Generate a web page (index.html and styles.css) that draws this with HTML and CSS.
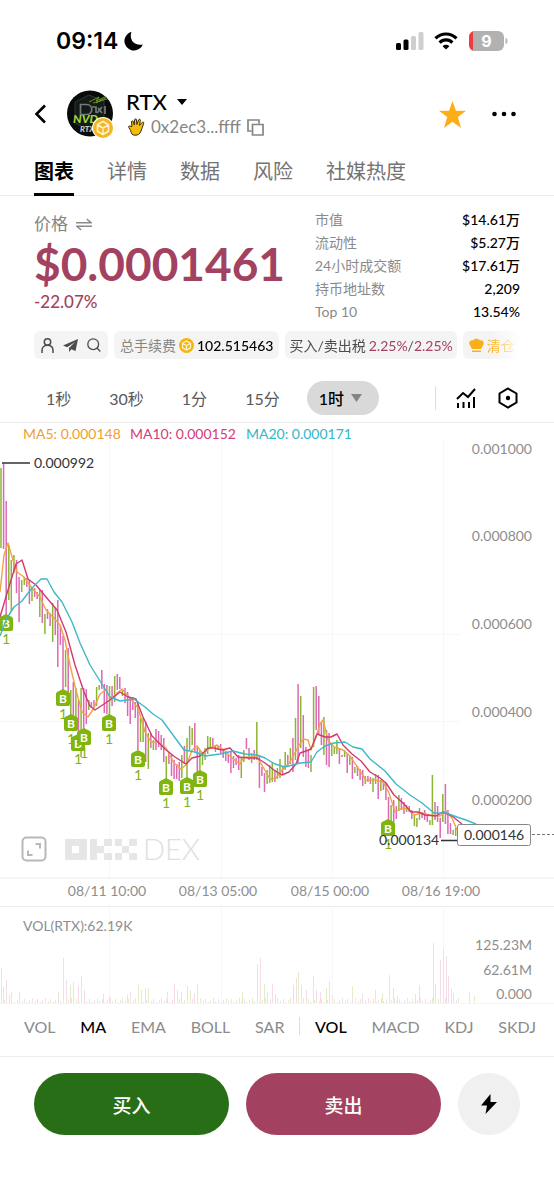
FILE: index.html
```html
<!DOCTYPE html>
<html lang="zh-CN">
<head>
<meta charset="utf-8">
<meta name="viewport" content="width=device-width, initial-scale=1">
<title>RTX</title>
<link rel="stylesheet" href="styles.css">
</head>
<body>
<div class="status">
  <span class="time">09:14</span>
  <svg class="moon" width="20" height="20" viewBox="0 0 20 20"><path d="M7.500.8A9.500 9.500 0 1 0 18.800 13.400C11 15.500 4.500 9 7.500.8Z"/></svg>
  <svg class="signal" width="28" height="20" viewBox="0 0 28 20"><rect x="0" y="12" width="5" height="7" rx="1.500"/><rect x="7.500" y="8.500" width="5" height="10.500" rx="1.500"/><rect x="15" y="5" width="5" height="14" rx="1.500" fill="#cfcfcf"/><rect x="22.500" y="1" width="5" height="18" rx="1.500" fill="#cfcfcf"/></svg>
  <svg class="wifi" width="24" height="18" viewBox="0 0 24 18" fill="none" stroke="#000" stroke-width="3.200"><path d="M1.500 6.300a15 15 0 0 1 21 0M5.600 10.600a9 9 0 0 1 12.800 0"/><path d="M12 17.500 8.600 14.200a4.800 4.800 0 0 1 6.800 0Z" fill="#000" stroke="none"/></svg>
  <svg class="battery" width="40" height="20" viewBox="0 0 40 20"><rect x="1" width="35" height="20" rx="6" fill="#b1b1b1"/><path d="M7 0H5v20h2a6 6 0 0 1-6-6V6a6 6 0 0 1 6-6Z" fill="#ee3b42"/><path d="M37.500 6.500a4 4 0 0 1 0 7Z" fill="#b1b1b1"/><text x="18.500" y="16" text-anchor="middle" class="battery-level">9</text></svg>
</div>

<header class="top">
  <button class="plain" aria-label="返回"><svg width="13" height="20" viewBox="0 0 13 20" fill="none" stroke="#000" stroke-width="2.600"><path d="M11 1.500 2.500 10l8.500 8.500"/></svg></button>
  <svg class="avatar" width="47" height="48" viewBox="0 0 47 48">
    <clipPath id="disc"><circle cx="23" cy="23.500" r="23"/></clipPath>
    <g clip-path="url(#disc)"><rect width="47" height="48" fill="#080b09"/><path d="m8 12 14-7 15 6v23l-13 7-16-8Z" fill="#141a15" stroke="#2c3a32"/><path d="M13.500 14.500h6c7 0 7 10 0 10h-6ZM25 17h4v6M31 18l4 5M35 17l-5 6M38 16v8" fill="none" stroke="#727b78" stroke-width="1.700"/><path d="m22 12 10-5-3 4 11-5M26 13l14-4M29 13l11-6" fill="none" stroke="#7eb32a" stroke-width=".8"/><text x="6" y="33" class="avatar-name">NVD</text><text x="13" y="42" class="avatar-sub">RTX</text></g>
    <circle cx="36" cy="38" r="11" fill="#fff"/><circle cx="36" cy="38" r="10" fill="#f5b522"/><path d="m36 31.500 5.500 3.200v6.500L36 44.500l-5.500-3.300v-6.500ZM30.500 35l5.500 3 5.500-3M36 38v6" fill="none" stroke="#fff3c8" stroke-width="1.600"/>
  </svg>
  <div class="token">
    <button class="plain name">RTX <svg width="10" height="6" viewBox="0 0 10 6"><path d="M0 0h10L5 6Z"/></svg></button>
    <div class="address">
      <svg width="17" height="18" viewBox="0 0 17 18"><path d="M1.500 8 4 8.500 3.500 4c0-1.500 1.700-1.500 2 0l.8 3L6.500 2c.3-1.500 2-1.500 2 0l.4 4.500L10.500 2c.6-1.300 2-.8 1.800.5l-.8 5L14 4.500c1-1 2.200 0 1.600 1.200L13 13c-1 3-3 4.300-6 4.200-3 0-4-2-4.300-4.700L.8 9.500C.3 8.500.8 7.800 1.500 8Z" fill="#f4bd0b" stroke="#342b08"/></svg>
      <span>0x2ec3...ffff</span>
      <button class="plain" aria-label="复制"><svg width="17" height="17" viewBox="0 0 17 17" fill="none" stroke="#858585" stroke-width="1.700"><path d="M4.500 12H1V1h11v3.500M5.500 5.500H16V16H5.500Z"/></svg></button>
    </div>
  </div>
  <button class="plain star" aria-label="收藏"><svg width="27" height="27" viewBox="0 0 27 27"><path d="m13.500 0 3.400 9.700H27l-8.200 6.400L22 27l-8.500-6.300L5 27l3.200-10.900L0 9.700h10.100Z" fill="#fdae16"/></svg></button>
  <button class="plain" aria-label="更多"><svg width="24" height="6" viewBox="0 0 24 6"><circle cx="2.500" cy="3" r="2.300"/><circle cx="12" cy="3" r="2.300"/><circle cx="21.500" cy="3" r="2.300"/></svg></button>
</header>

<nav class="tabs">
  <a class="active" href="#chart">图表</a><a href="#info">详情</a><a href="#data">数据</a><a href="#risk">风险</a><a href="#social">社媒热度</a>
</nav>

<section class="summary">
  <div class="price-box">
    <div class="label">价格 <svg width="16" height="13" viewBox="0 0 16 13" fill="none" stroke="#8a8a8a" stroke-width="1.500"><path d="M0 4.700h15L10.800 1M16 8.300H1L5.200 12"/></svg></div>
    <div class="price">$0.0001461</div>
    <div class="change">-22.07%</div>
  </div>
  <dl class="stats">
    <div><dt>市值</dt><dd>$14.61万</dd></div>
    <div><dt>流动性</dt><dd>$5.27万</dd></div>
    <div><dt>24小时成交额</dt><dd>$17.61万</dd></div>
    <div><dt>持币地址数</dt><dd>2,209</dd></div>
    <div><dt>Top 10</dt><dd>13.54%</dd></div>
  </dl>
</section>

<div class="chips">
  <div class="chip links">
    <a href="#holders" aria-label="持有人"><svg width="13" height="15" viewBox="0 0 13 15" fill="none" stroke="#4c4c4c" stroke-width="1.500"><circle cx="6.500" cy="4" r="3.200"/><path d="M1 15v-2.500c0-3 2-5.300 5.500-5.300S12 9.500 12 12.500V15"/></svg></a>
    <a href="#telegram" aria-label="Telegram"><svg width="15" height="13" viewBox="0 0 15 13"><path d="M15 0 0 6.500l4.200 1.700L12 3 6 9v4l2.400-2.800L12.500 12Z" fill="#4c4c4c"/></svg></a>
    <a href="#search" aria-label="搜索"><svg width="14" height="14" viewBox="0 0 14 14" fill="none" stroke="#4c4c4c" stroke-width="1.300"><circle cx="6.200" cy="6.200" r="5.400"/><path d="m10 10 3.300 3.500"/></svg></a>
  </div>
  <div class="chip"><span class="muted">总手续费</span><svg width="15" height="15" viewBox="0 0 15 15"><circle cx="7.500" cy="7.500" r="7.500" fill="#f5b50f"/><path d="m7.500 3 4 2.300v4.500l-4 2.300-4-2.300V5.300ZM3.500 5.500l4 2 4-2M7.500 7.500V12" fill="none" stroke="#fff4cf" stroke-width="1.200"/></svg><span class="strong">102.515463</span></div>
  <div class="chip tax"><span>买入/卖出税</span><span><b>2.25%</b>/<b>2.25%</b></span></div>
  <div class="chip sold"><svg width="15" height="14" viewBox="0 0 15 14" fill="#faae17"><path d="M3 11 .8 7C-.8 4 1.500 1.800 4 2.500 5 0 10 0 11 2.500c2.500-.7 4.800 1.500 3.200 4.500L12 11Z"/><path d="M3 12.500h9V14H3Z"/></svg><span>清仓</span></div>
</div>

<div class="frames">
  <button class="plain">1秒</button><button class="plain">30秒</button><button class="plain">1分</button><button class="plain">15分</button>
  <button class="plain pill">1时 <svg width="11" height="8" viewBox="0 0 11 8"><path d="M0 0h11L5.500 8Z" fill="#858585"/></svg></button>
  <span class="tools">
    <button class="plain" aria-label="指标"><svg width="20" height="21" viewBox="0 0 20 21" fill="none" stroke="#000" stroke-width="2"><path d="m1 11 6-6 5 4 7-8M2 15v5M7.500 14v6M13 14v6M18 9v11"/></svg></button>
    <button class="plain" aria-label="设置"><svg width="20" height="22" viewBox="0 0 20 22" fill="none" stroke="#000" stroke-width="2"><path d="m10 1.500 8.500 5v9l-8.500 5-8.500-5v-9Z"/><circle cx="10" cy="11" r="2.200" fill="#000" stroke="none"/></svg></button>
  </span>
</div>

<svg class="chart" id="chart" viewBox="0 422 554 582" role="img" aria-label="RTX 1时 K线图">
  <path class="grid" d="M0 634.500H460M0 721.500H460M109.500 440V878M221.500 440V878M332.500 440V878M443.500 440V878M109.500 907V1003M221.500 907V1003M332.500 907V1003M443.500 907V1003"/>
  <path class="rule" d="M0 422.500H554M0 878H554M0 906.500H554"/>
  <path class="rule faint" d="M0 1003.500H554"/>
  <g class="watermark">
    <rect x="22.500" y="837.500" width="23" height="23" rx="4"/>
    <path d="M35.500 844h4.500v4.500M28 850.500v4.500h4.500"/>
    <path class="fill" d="M65 839h22v21H65Zm7 7v7h7v-7ZM90 839h7v7h7v-7h8v7h-8v7h8v7h-8v-7h-7v7h-7ZM115 839h7v7h7v-7h8v7h-8v7h8v7h-8v-7h-7v7h-7v-7h7v-7h-7Z" fill-rule="evenodd"/>
    <text x="143" y="860">DEX</text>
  </g>
  <g id="candles"></g>
  <path class="ma5" d="M0 592 4 555 8 543 13 560 17 572 24 577 32 588 40 597 46 610 53 617 60 625 65 640 70 665 76 690 82 712 88 717 94 708 100 694 106 690 111 699 117 693 122 689 130 698 138 708 145 732 151 742 158 742 166 748 174 763 181 769 187 764 192 750 197 746 203 754 210 748 217 745 224 750 232 758 240 764 244 757 257 757 263 767 270 779 276 778 283 769 290 762 297 749 303 739 308 740 311 750 315 740 320 724 323 720 328 740 334 747 343 750 350 756 358 768 366 780 374 780 383 782 389 793 395 812 402 808 408 809 414 815 422 813 430 815 440 816 446 811 452 818 457 830"/>
  <path class="ma10" d="M0 617 8 590 16 564 22 560 28 579 36 585 46 597 57 610 66 632 75 665 84 692 90 706 95 710 101 706 110 700 120 692 128 697 136 699 143 717 152 736 165 749 175 757 186 764 192 758 200 756 208 748 214 748 222 750 230 748 238 757 248 758 257 758 265 763 274 770 282 775 289 772 296 764 300 753 306 751 311 749 317 734 325 737 331 737 337 734 343 745 352 754 361 761 370 772 380 778 386 783 394 795 404 804 411 812 418 812 425 815 436 816 443 812 452 816 462 824"/>
  <g id="markers"></g>
  <path class="ma20" d="M0 636 7 618 14 607 22 601 32 588 41 579 47 579 54 592 62 602 72 622 80 643 90 665 100 681 110 697 120 701 134 699 145 707 153 714 162 720 173 735 184 750 195 752 205 756 220 754 233 751 245 754 257 755 265 758 275 764 285 767 300 763 311 762 317 752 325 746 334 743 345 742 353 747 362 749 370 759 385 771 396 784 410 795 422 803 434 813 446 813 457 817 466 820 476 824"/>
  <path class="extreme" d="M2 463H30M441 840.500H458"/>
  <text class="dark" x="34" y="468">0.000992</text>
  <text class="dark" x="379" y="845">0.000134</text>
  <path class="last-line" d="M532 834.500H554"/>
  <rect class="last-box" x="457.500" y="824.500" width="73" height="21" rx="2"/>
  <text class="dark" x="464" y="840">0.000146</text>
  <text class="t5" x="23" y="439">MA5: 0.000148</text>
  <text class="t10" x="130" y="439">MA10: 0.000152</text>
  <text class="t20" x="246" y="439">MA20: 0.000171</text>
  <g class="scale end">
    <text x="532" y="454">0.001000</text><text x="532" y="541">0.000800</text><text x="532" y="629">0.000600</text><text x="532" y="717">0.000400</text><text x="532" y="805">0.000200</text>
    <text x="532" y="950">125.23M</text><text x="532" y="975">62.61M</text><text x="532" y="999">0.000</text>
  </g>
  <g class="scale mid"><text x="107" y="896">08/11 10:00</text><text x="218" y="896">08/13 05:00</text><text x="330" y="896">08/15 00:00</text><text x="441" y="896">08/16 19:00</text></g>
  <text class="scale" x="23" y="931">VOL(RTX):62.19K</text>
  <g id="volume"></g>
</svg>

<nav class="indicators">
  <a href="#vol">VOL</a><a class="on" href="#ma">MA</a><a href="#ema">EMA</a><a href="#boll">BOLL</a><a href="#sar">SAR</a><i></i><a class="on" href="#vol2">VOL</a><a href="#macd">MACD</a><a href="#kdj">KDJ</a><a href="#skdj">SKDJ</a>
</nav>

<footer class="actions">
  <button class="buy">买入</button>
  <button class="sell">卖出</button>
  <button class="flash" aria-label="闪电交易"><svg width="16" height="20" viewBox="0 0 16 20"><path d="M9.500 0 0 11.500h6L4.500 20 16 8H9.500Z"/></svg></button>
</footer>
<script src="chart.js"></script>
</body>
</html>
```
FILE: styles.css
```css
* { box-sizing: border-box; }
body {
  margin: 0;
  background: #fff;
  color: #000;
  font-family: Lato, "Noto Sans CJK SC", sans-serif;
  font-size: 14px;
}
a { color: inherit; text-decoration: none; }
svg { display: block; flex: none; }
.plain {
  margin: 0;
  padding: 0;
  border: 0;
  background: none;
  color: inherit;
  font: inherit;
}
.status {
  display: flex;
  align-items: center;
  height: 82px;
  padding: 0 46px 0 56px;
}
.time { font: 600 23px/28px Inter, sans-serif; }
.moon { margin-left: 6px; }
.signal { margin-left: auto; }
.wifi { margin: 0 10px; }
.battery-level { font: 700 16px Inter, sans-serif; fill: #fff; }
.top {
  display: flex;
  align-items: center;
  height: 64px;
  padding: 0 38px 0 34px;
}
.avatar { margin: 0 12px 0 20px; }
.avatar-name { font: italic 900 12px Lato, sans-serif; fill: #9bd437; }
.avatar-sub { font: italic 900 8px Lato, sans-serif; fill: #c8cdc8; }
.token { flex: 1; }
.name {
  display: flex;
  align-items: center;
  gap: 10px;
  font-size: 22px;
  font-weight: 500;
  line-height: 26px;
}
.address {
  display: flex;
  align-items: center;
  gap: 6px;
  padding-left: 2px;
  color: #858585;
  font-size: 17px;
  line-height: 24px;
}
.star { margin-right: 26px; }
.tabs {
  display: flex;
  gap: 33px;
  height: 50px;
  padding: 0 34px;
  border-bottom: 1px solid #ececec;
  color: #737373;
  font-size: 20px;
  line-height: 50px;
}
.tabs a { height: 50px; }
.tabs .active {
  border-bottom: 3px solid #000;
  color: #000;
  font-weight: 700;
}
.summary {
  display: flex;
  justify-content: space-between;
  padding: 12px 34px 0;
}
.price-box { padding-top: 4px; }
.label {
  display: flex;
  align-items: center;
  gap: 8px;
  color: #858585;
  font-size: 17px;
  line-height: 24px;
}
.price {
  color: #a34260;
  font-size: 46px;
  font-weight: 700;
  line-height: 56px;
}
.change {
  color: #a34260;
  font-size: 17px;
  font-weight: 500;
  line-height: 20px;
}
.stats { width: 205px; margin: 0; }
.stats div {
  display: flex;
  justify-content: space-between;
  line-height: 23px;
}
.stats dt { color: #8a8a8a; }
.stats dd { margin: 0; font-weight: 500; }
.chips {
  display: flex;
  gap: 6px;
  margin: 8px 34px 0;
  overflow: hidden;
  -webkit-mask-image: linear-gradient(to right, #000 94%, transparent);
  mask-image: linear-gradient(to right, #000 94%, transparent);
}
.chip {
  display: flex;
  flex: none;
  align-items: center;
  gap: 3px;
  height: 28px;
  padding: 0 6px;
  border-radius: 6px;
  background: #f4f4f4;
  white-space: nowrap;
}
.links { gap: 9px; padding: 0 7px; }
.muted { color: #858585; }
.strong { font-weight: 500; }
.tax { padding: 0 4px; color: #4d4d4d; }
.tax b { color: #a34260; font-weight: 400; }
.sold { padding: 0 4px 0 6px; color: #faae17; }
.frames {
  display: flex;
  align-items: center;
  gap: 38px;
  height: 63px;
  padding: 15px 36px 0 46px;
  color: #585858;
  font-size: 16px;
}
.pill {
  display: flex;
  align-items: center;
  gap: 7px;
  height: 34px;
  margin-left: -11px;
  padding: 0 17px 0 12px;
  border-radius: 17px;
  background: #d9d9d9;
  color: #000;
  font-weight: 500;
}
.tools {
  display: flex;
  align-items: center;
  gap: 22px;
  height: 24px;
  margin-left: auto;
  padding-left: 20px;
  border-left: 1px solid #ddd;
}
.chart {
  width: 100%;
  height: auto;
  fill: none;
  font-size: 14px;
}
.grid { stroke: #f7f7f7; }
.rule { stroke: #ececec; }
.faint { stroke: #f5f5f5; }
.watermark rect { stroke: #b8b8b8; stroke-width: 2; }
.watermark path { stroke: #b8b8b8; stroke-width: 2; }
.watermark .fill { fill: #e6e6e6; stroke: none; }
.watermark text { fill: #e0e0e0; font-size: 29px; font-weight: 300; }
.up { stroke: #8db534; stroke-width: 1.5; }
.down { stroke: #dc69b4; stroke-width: 1.5; }
.ma5, .ma10, .ma20 { stroke-width: 1.4; stroke-linejoin: round; }
.ma5 { stroke: #efa347; }
.ma10 { stroke: #cf3b70; }
.ma20 { stroke: #3eb8c8; }
.t5 { fill: #efa030; }
.t10 { fill: #d43a78; }
.t20 { fill: #30b8c8; }
.extreme { stroke: #333; stroke-width: 1.5; }
.dark { fill: #333; }
.last-line { stroke: #777; stroke-dasharray: 3 2; }
.last-box { fill: #fff; fill-opacity: .9; stroke: #888; }
.scale { fill: #8e8e8e; }
.end { text-anchor: end; }
.mid { text-anchor: middle; }
.marker path { fill: #80b50e; }
.marker text { fill: #fff; font-size: 12px; font-weight: 700; text-anchor: middle; }
.marker .count { fill: #80b50e; font-size: 14px; font-weight: 400; }
.vol-up { stroke: #e3edc8; }
.vol-down { stroke: #f6dce8; }
.indicators {
  display: flex;
  align-items: center;
  justify-content: space-between;
  height: 53px;
  padding: 0 18px 8px 24px;
  border-bottom: 1px solid #ececec;
  color: #8c8c8c;
  font-size: 16px;
}
.indicators i {
  width: 1px;
  height: 18px;
  margin: 0 -10px;
  background: #ddd;
}
.indicators .on { color: #000; font-weight: 500; }
.actions {
  display: flex;
  gap: 17px;
  padding: 16px 34px 0;
}
.actions button {
  height: 62px;
  padding: 0;
  border: 0;
  border-radius: 31px;
  color: #fff;
  font: 500 19px "Noto Sans CJK SC", sans-serif;
}
.buy { flex: 1; background: #286e16; }
.sell { flex: 1; background: #a34260; }
.actions .flash {
  display: grid;
  place-items: center;
  width: 62px;
  background: #f0f0f0;
}
```
FILE: chart.js
```js
const NS = 'http://www.w3.org/2000/svg';

function add(parent, tag, attrs, text) {
  const el = document.createElementNS(NS, tag);
  for (const key in attrs) el.setAttribute(key, attrs[key]);
  if (text) el.textContent = text;
  parent.appendChild(el);
  return el;
}

// Each candle: direction (G up, P down), high and low; one candle per step.
const candles = `G468-548 P463-549 P501-620 G545-600 G560-612 G555-573 P560-593 P577-622 G580-592 G577-585
P578-587 P580-604 G588-601 P588-597 P592-599 G590-617 P590-623 G614-634 P609-619 P613-626
G603-642 P608-635 P600-667 P626-645 P636-690 G650-687 P648-692 G690-720 P682-716 G688-720
P700-735 G688-757 P688-745 P689-724 G700-710 P702-708 P700-708 G687-706 G685-690 P670-689
P684-713 P685-714 G686-715 P686-706 G676-702 P674-690 P677-689 G690-696 P688-703 P692-716
P697-724 P697-710 P702-718 P702-750 G718-742 G718-742 P722-762 G733-769 P733-748 G740-750
P729-750 P731-747 P735-750 P738-762 G756-780 P752-764 P755-776 P760-779 P764-779 P762-781
G755-778 P746-764 G738-778 G726-750 G728-745 P723-751 P746-775 G750-772 G752-765 G748-760
G736-754 G737-748 P738-747 G745-752 G746-750 P744-753 P750-758 P751-761 P754-763 P752-773
P756-768 P758-765 P755-770 G757-778 G750-762 P738-749 P748-760 G753-763 P750-760 G722-760
P755-788 P767-776 P773-792 G770-784 G765-783 G762-782 P770-782 G768-779 G759-778 P767-775
G752-770 P755-766 G748-764 P738-772 G718-760 P684-763 G696-748 P715-757 P747-767 P750-768
G755-772 G687-747 P686-730 P696-734 P722-745 G717-755 P730-765 P733-767 G745-756 G748-754
G740-754 P748-764 P755-757 G750-757 P753-773 G756-765 P757-779 G767-773 P766-776 P769-780
P770-786 G776-784 P776-782 P777-784 G778-792 G774-784 P775-799 G780-791 P782-790 P783-800
P797-822 G805-825 P800-822 P806-819 G795-811 P798-810 P802-814 G805-812 P806-812 P810-819
G814-826 G818-827 G808-820 P812-818 P810-820 P816-822 G820-825 G775-825 P802-820 P806-822
P818-838 G794-822 P784-824 P810-834 P823-834 G830-835 G828-836`.split(/\s+/);

const step = (455.7 - 1) / (candles.length - 1);
let up = '', down = '';
candles.forEach((c, i) => {
  const [high, low] = c.slice(1).split('-');
  const d = `M${(1 + i * step).toFixed(1)} ${high}V${low}`;
  if (c[0] === 'G') up += d; else down += d;
});
const candleGroup = document.getElementById('candles');
add(candleGroup, 'path', { class: 'up', d: up });
add(candleGroup, 'path', { class: 'down', d: down });

// Buy markers: centre x and top y.
const markers = [[6, 615], [63, 690], [71, 715], [78, 735], [84, 729], [109, 715], [138, 751], [166, 779], [187, 778], [200, 771], [388, 820]];
const markerGroup = document.getElementById('markers');
for (const [x, y] of markers) {
  const g = add(markerGroup, 'g', { class: 'marker' });
  add(g, 'text', { class: 'count', x: x, y: y + 29 }, '1');
  add(g, 'path', { d: `M${x} ${y - 1}l6 3q1 1 1 2v10q0 2-2 2h-10q-2 0-2-2v-10q0-1 1-2Z` });
  add(g, 'text', { x: x, y: y + 13 }, 'B');
}

// Volume peaks: x and top y; low bars fill the steps between them.
const peaks = [[1, 968], [3, 987], [6, 980], [9, 995], [11, 992], [19, 992], [58, 992], [63, 958], [66, 980], [70, 985], [73, 982], [78, 986], [81, 976], [84, 990], [103, 994], [109, 996], [127, 995], [130, 992], [138, 984], [141, 990], [145, 988], [148, 988], [167, 992], [174, 984], [177, 990], [181, 992], [187, 986], [190, 990], [194, 993], [197, 984], [242, 992], [257, 964], [260, 958], [264, 984], [267, 992], [272, 984], [275, 994], [293, 985], [296, 978], [298, 972], [301, 985], [306, 990], [313, 976], [316, 990], [320, 992], [326, 988], [329, 981], [332, 995], [352, 986], [362, 994], [375, 990], [382, 993], [389, 975], [393, 988], [397, 996], [415, 994], [419, 985], [433, 943], [435, 984], [440, 960], [443, 949], [446, 956], [448, 976], [451, 988], [453, 993], [469, 992], [474, 996]];
let volUp = '', volDown = '';
peaks.forEach(([x, y], i) => {
  const d = `M${x + 0.5} ${y}V1003`;
  if (i % 3 === 0) volUp += d; else volDown += d;
});
for (let i = 0; i < 178; i++) {
  const height = 1 + (i * 7) % 5;
  const d = `M${Math.round(1 + i * step) + 0.5} ${1003 - height}V1003`;
  if (i % 2) volUp += d; else volDown += d;
}
const volume = document.getElementById('volume');
add(volume, 'path', { class: 'vol-up', d: volUp });
add(volume, 'path', { class: 'vol-down', d: volDown });
```
